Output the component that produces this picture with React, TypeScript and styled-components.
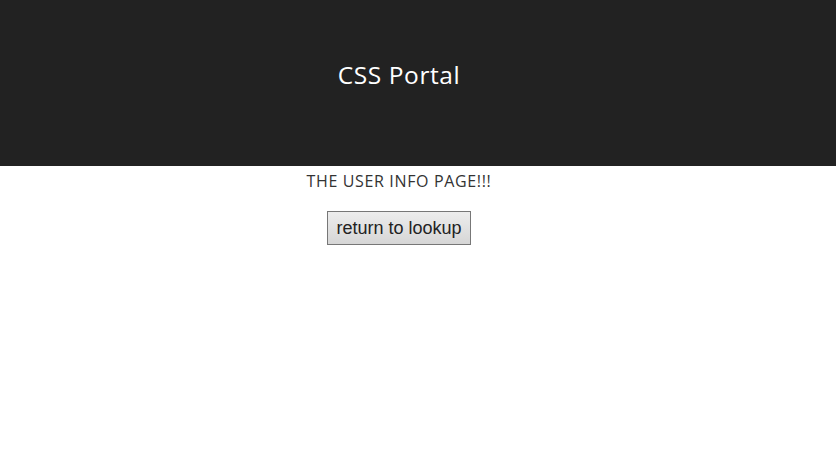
import React from "react";
import styled, { createGlobalStyle } from "styled-components";

const Global = createGlobalStyle`
  html, body { margin: 0; padding: 0; background: #fff; }
  body { font-family: "Open Sans", "Noto Sans", sans-serif; color: #333; }
`;

const Header = styled.header`
  background: #222222;
  height: 166px;
  display: flex;
  align-items: center;
`;

const Inner = styled.div`
  width: 798px;
  text-align: center;
`;

const Title = styled.h1`
  margin: 0 0 16px 0;
  font-weight: 400;
  font-size: 24.5px;
  letter-spacing: 0.6px;
  color: #fff;
  line-height: 32px;
`;

const Main = styled.main`
  width: 798px;
  text-align: center;
  display: flex;
  flex-direction: column;
  align-items: center;
`;

const Heading = styled.p`
  margin: 4px 0 0 0;
  font-size: 16px;
  letter-spacing: 0.65px;
  line-height: 22px;
  color: #333;
`;

const Button = styled.button`
  margin-top: 19px;
  height: 34px;
  padding: 0 8px;
  font-family: "Liberation Sans", Arial, sans-serif;
  font-size: 18px;
  color: #222;
  border: 1px solid #777;
  border-radius: 0;
  background: linear-gradient(#ededed, #d6d6d6);
`;

export default function App() {
  return (
    <>
      <Global />
      <Header>
        <Inner>
          <Title>CSS Portal</Title>
        </Inner>
      </Header>
      <Main>
        <Heading>THE USER INFO PAGE!!!</Heading>
        <Button>return to lookup</Button>
      </Main>
    </>
  );
}
